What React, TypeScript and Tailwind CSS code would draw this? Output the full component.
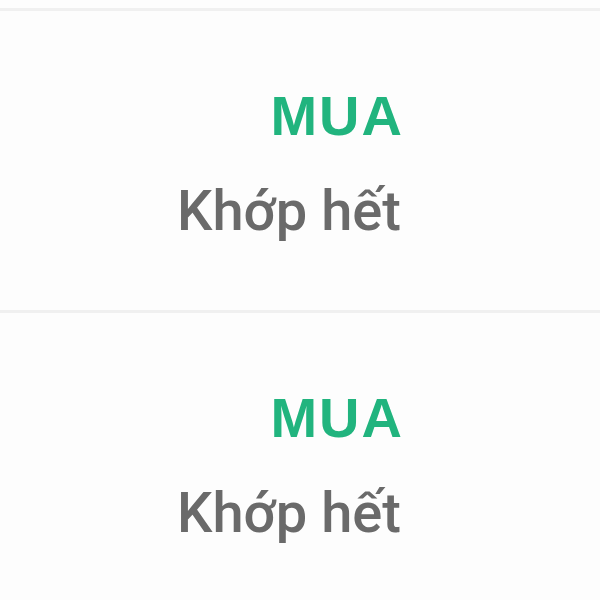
import React from 'react'

interface OrderRowProps {
  side: string
  status: string
}

const OrderRow: React.FC<OrderRowProps> = ({ side, status }) => {
  return (
    <div className="flex flex-col">
      <div className="h-[3px] bg-[#f0f0f0]" />
      <div className="flex justify-end pr-[200px] pt-[77px] pb-[71px]">
        <div className="flex flex-col items-end gap-[39px]">
          <span className="-mr-[4px] text-[56px] leading-none font-bold tracking-[2px] text-[#21b47e] font-['Liberation_Sans',sans-serif]">
            {side}
          </span>
          <span className="-mr-[1px] text-[56px] leading-none font-medium text-[#6a6a6a]">{status}</span>
        </div>
      </div>
    </div>
  )
}

export default function App() {
  const rows = [
    { side: 'MUA', status: 'Khớp hết' },
    { side: 'MUA', status: 'Khớp hết' },
  ]

  return (
    <div
      className="w-[600px] h-[600px] overflow-hidden bg-[#fdfdfd] pt-2"
      style={{ fontFamily: 'Roboto, "Noto Sans", sans-serif' }}
    >
      {rows.map((row, i) => (
        <OrderRow key={i} side={row.side} status={row.status} />
      ))}
    </div>
  )
}
